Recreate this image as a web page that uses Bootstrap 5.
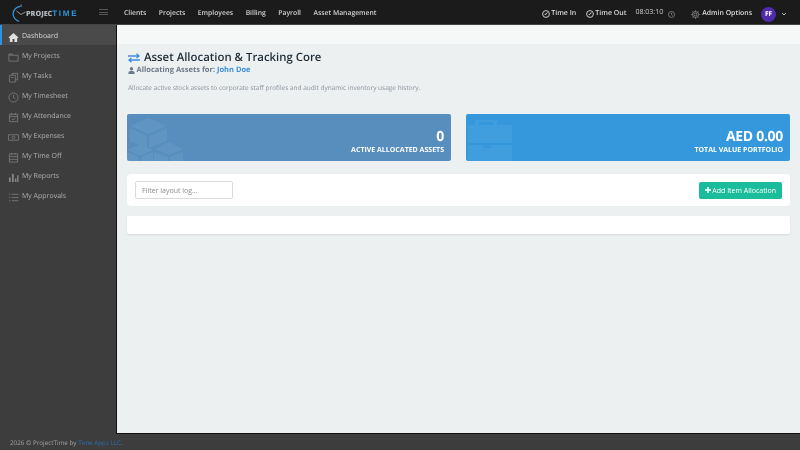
<!DOCTYPE html>
<html lang="en">
<head>
<meta charset="utf-8">
<title>ProjectTime</title>
<link href="https://cdn.jsdelivr.net/npm/bootstrap@5.3.0/dist/css/bootstrap.min.css" rel="stylesheet">
<style>
html,body{height:450px;overflow:hidden}
body{font-family:"Open Sans","Liberation Sans",sans-serif;background:#3d3d3d;font-size:7px;color:#444;text-rendering:geometricPrecision}
.topbar,.sidebar,.content,.foot{filter:blur(.3px)}
.topbar{height:25px;background:#1b1b1b;border-bottom:1px solid #444;color:#ddd;padding:0}
.brand-box{width:116px;height:24px;flex:none;padding-left:10px}
.brand-txt{font-size:7.2px;font-weight:800;color:#aeb4ba;line-height:1;margin-top:4px;margin-left:0;white-space:nowrap}
.brand-txt span{color:#2f93d8;font-family:"Liberation Sans",sans-serif;font-weight:700;font-size:8px;letter-spacing:1.7px}
.burger{width:9px;height:6px;margin-left:auto;margin-right:8px;border-top:1px solid #555;border-bottom:1px solid #555;position:relative}
.burger::after{content:"";position:absolute;left:0;right:0;top:2px;height:1px;background:#555}
.topnav{gap:12.5px;font-size:6.8px;font-weight:600;color:#d0d0d0;margin-left:8px;margin-top:3px}
.top-right{color:#ddd;font-size:7px;font-weight:600;margin-left:auto;padding-right:13px;margin-top:4px}
.ti{gap:1px;margin-right:10px}
.ti+.ti{margin-right:9px}
.clock{font-size:7px;font-weight:400;margin-right:5px;color:#d0d0d0;margin-top:-2px}
.adm{font-size:6.9px;margin-right:9px}
.gear{margin-right:2px}
.avatar{width:15px;height:15px;border-radius:50%;background:#4f2bab;color:#fff;font-size:6.5px;font-weight:700;margin-right:5px}
.shell{flex:1;min-height:0}
.sidebar{width:116px;flex:none;background:#3d3d3d;font-size:7px;color:#b0b0b0}
.sideitem{height:20px;gap:3px;border-left:2px solid transparent;padding:5px 0 0 6px}
.sideitem svg{width:11px;height:11px;flex:none;color:#858585}
.sideitem.on{background:#4a4a4a;border-left-color:#2f93e0;color:#d8d8d8}
.sideitem.on svg{color:#e0e0e0}
.mainpane{flex:1;min-width:0;background:#ecf0f1;border-left:1px solid #111;border-bottom:1px solid #111;display:flex;flex-direction:column}
.subbar{height:19px;background:#f6f7f7;flex:none}
.content{padding:0 10px}
.ptitle{font-size:11.4px;font-weight:600;color:#1f2b36;line-height:16px;margin:6px 0 0 1px;gap:4px}
.psub{font-size:7.5px;font-weight:700;color:#6c7a89;line-height:11px;gap:1.5px;margin:-1px 0 0 1px}
.psub a{color:#3f8fdc;text-decoration:none}
.pdesc{font-size:6.5px;color:#8a9199;line-height:10px;margin:7px 0 0 1px}
.statrow{gap:15px;margin-top:21px}
.statbox{flex:1;height:47px;border-radius:2px;color:#fff;padding:14px 7px 0;text-align:right;overflow:hidden}
.sb-a{background:#578ebe;width:324px;flex:none}
.sb-b{background:#3598dc}
.stat-num{font-size:14px;font-weight:700;line-height:18px;letter-spacing:-.3px}
.stat-lbl{font-size:7px;font-weight:700;line-height:9px}
.wm{position:absolute;left:0;top:0;height:47px;width:60px;opacity:.06;color:#fff}
.toolbox{background:#fff;border-radius:4px;height:32px;margin-top:13px;padding:0 8px;box-shadow:0 0 1px rgba(0,0,0,.05)}
.filterin{width:98px;height:18px;border:1px solid #d7dbde;border-radius:2px;font-size:7px;padding:0 6px;color:#8b8b8b;background:#fff}
.filterin::placeholder{color:#8b8b8b;opacity:1}
.addbtn{height:17px;background:#1abc9c;color:#fff;font-size:7px;font-weight:400;border:0;border-radius:2px;padding:0 6px;gap:1.5px;line-height:1}
.addbtn:hover{background:#1abc9c;color:#fff}
.emptybox{background:#fff;height:18px;border-radius:2px;margin-top:10px;box-shadow:0 1px 2px rgba(0,0,0,.1)}
.foot{height:16px;flex:none;font-size:6.3px;color:#a3a3a3;padding-left:10px;padding-top:1px}
.foot a{color:#2d6fb0;text-decoration:none}
</style>
</head>
<body class="d-flex flex-column">
<nav class="topbar d-flex align-items-center">
  <div class="brand-box d-flex align-items-center">
    <svg width="16" height="19" viewBox="0 0 16 19" fill="none"><path d="M10 3.500A7.500 7.500 0 0 0 9 18.300" stroke="#2f93d8" stroke-width="1.300"/><path d="M11 1.500v2.500M15.500 9 11 11.500 6.500 8" stroke="#aeb4ba" stroke-width=".8"/></svg>
    <span class="brand-txt">PROJEC<span>TIME</span></span>
    <span class="burger"></span>
  </div>
  <div class="topnav d-flex"><span>Clients</span><span>Projects</span><span>Employees</span><span>Billing</span><span>Payroll</span><span>Asset Management</span></div>
  <div class="top-right d-flex align-items-center">
    <span class="ti d-flex align-items-center"><svg width="8" height="8" viewBox="0 0 8 8" fill="none" stroke="#ddd" stroke-width=".9"><circle cx="4" cy="4" r="3.400"/><path d="M4 4.400 5.400 2.400M4 4.400H2.600"/></svg>Time In</span>
    <span class="ti d-flex align-items-center"><svg width="8" height="8" viewBox="0 0 8 8" fill="none" stroke="#ddd" stroke-width=".9"><circle cx="4" cy="4" r="3.400"/><path d="M4 4.400 5.400 2.400M4 4.400H2.600"/></svg>Time Out</span>
    <span class="clock">08:03:10</span>
    <svg class="me-3" width="7" height="7" viewBox="0 0 7 7" fill="none" stroke="#8a8a8a" stroke-width=".8"><circle cx="3.500" cy="3.500" r="3"/><path d="M3.500 1.800v1.900l1.200.5"/></svg>
    <svg class="gear" width="9" height="9" viewBox="0 0 10 10" fill="none" stroke="#999" stroke-width=".8"><circle cx="5" cy="5" r="1.600"/><circle cx="5" cy="5" r="3.400"/><path d="M5 .3v1.300M5 8.400v1.300M.3 5h1.300M8.400 5h1.300M1.700 1.700l.9.9M7.400 7.400l.9.9M1.700 8.300l.9-.9M7.400 2.600l.9-.9"/></svg>
    <span class="adm">Admin Options</span>
    <span class="avatar d-flex align-items-center justify-content-center">FF</span>
    <svg width="6" height="4" viewBox="0 0 6 4" fill="none" stroke="#bbb" stroke-width="1"><path d="M1 1l2 2 2-2"/></svg>
  </div>
</nav>
<div class="shell d-flex">
  <aside class="sidebar">
    <div class="sideitem on d-flex align-items-center"><svg viewBox="0 0 12 12" fill="currentColor"><path fill-rule="evenodd" d="M6 1 .6 6l.7.8L2 6.200V11h8V6.200l.7.6.7-.8zM5 7.500h2V11H5z"/></svg>Dashboard</div>
    <div class="sideitem d-flex align-items-center"><svg viewBox="0 0 12 12" fill="none" stroke="currentColor" stroke-width=".8"><path d="M1 3.500h10V10H1zM1 3.500V2.200h3.800l.7 1.300"/></svg>My Projects</div>
    <div class="sideitem d-flex align-items-center"><svg viewBox="0 0 12 12" fill="none" stroke="currentColor" stroke-width=".8"><path d="M1.500 3.500h6.500V11H1.500zM4.500 3.500V1.500H10.500V8.500H8M3.500 6h2.500"/></svg>My Tasks</div>
    <div class="sideitem d-flex align-items-center"><svg viewBox="0 0 12 12" fill="none" stroke="currentColor" stroke-width=".8"><circle cx="6" cy="6" r="5"/><path d="M6 3v3.200l2 1.300"/></svg>My Timesheet</div>
    <div class="sideitem d-flex align-items-center"><svg viewBox="0 0 12 12" fill="none" stroke="currentColor" stroke-width=".8"><path d="M1.500 2.500h9v8h-9zM1.500 5h9M4 1v2M8 1v2M4 7.500l1.500 1.300L8 6.800"/></svg>My Attendance</div>
    <div class="sideitem d-flex align-items-center"><svg viewBox="0 0 12 12" fill="none" stroke="currentColor" stroke-width=".8"><path d="M.6 3h10.800v6H.6z"/><circle cx="6" cy="6" r="1.500"/></svg>My Expenses</div>
    <div class="sideitem d-flex align-items-center"><svg viewBox="0 0 12 12" fill="none" stroke="currentColor" stroke-width=".8"><path d="M1.500 2h9v9h-9zM1.500 5h9M1.500 8h9M4 1v2M8 1v2"/></svg>My Time Off</div>
    <div class="sideitem d-flex align-items-center"><svg viewBox="0 0 12 12" fill="currentColor"><path d="M1 6h2v5H1zM4.300 2h2v9h-2zM7.500 7h1.700v4H7.500zM10 3.500h1.500V11H10z"/></svg>My Reports</div>
    <div class="sideitem d-flex align-items-center"><svg viewBox="0 0 12 12" fill="none" stroke="currentColor" stroke-width=".8"><path d="M4 2.500h7.500M4 6h7.500M4 9.500h7.500M1 2.500h1.500M1 6h1.500M1 9.500h1.500"/></svg>My Approvals</div>
  </aside>
  <main class="mainpane">
    <div class="subbar"></div>
    <div class="content">
      <h1 class="ptitle d-flex align-items-center">
        <svg width="12" height="10" viewBox="0 0 12 10" fill="none" stroke="#3f8fdc" stroke-width="1.300"><path d="M0 3h11M8.500 .8 11 3 8.500 5M12 7H1M3.500 5 1 7l2.500 2.200"/></svg>
        Asset Allocation &amp; Tracking Core</h1>
      <div class="psub d-flex align-items-center">
        <svg width="7" height="7" viewBox="0 0 7 7" fill="#6c7a89"><circle cx="3.500" cy="1.800" r="1.700"/><path d="M.3 7c0-2.500 1-3.300 3.200-3.300S6.700 4.500 6.700 7z"/></svg>
        <span>Allocating Assets for: <a href="#">John Doe</a></span>
      </div>
      <p class="pdesc">Allocate active stock assets to corporate staff profiles and audit dynamic inventory usage history.</p>
      <div class="statrow d-flex">
        <div class="statbox sb-a position-relative">
          <svg class="wm" viewBox="0 0 60 47" fill="currentColor"><path d="M21 4 40 12 21 20 3 12zM3 14l17 8v12L3 27zM40 14v13l-18 7V22zM42 28l14 7-14 6-14-6zM13 30l13 6-13 6L0 36zM0 38l12 5v4H0zM27 38l14 5v4H27zM56 38v9H43v-4zM14 43l12-5v9H14z"/></svg>
          <div class="stat-num">0</div><div class="stat-lbl">ACTIVE ALLOCATED ASSETS</div>
        </div>
        <div class="statbox sb-b position-relative">
          <svg class="wm" viewBox="0 0 60 47" fill="currentColor"><path fill-rule="evenodd" d="M9 11V6h22v5h15v18H2V11zM13 8v3h14V8zM2 31h15v3h8v-3h21v16H2z"/></svg>
          <div class="stat-num">AED 0.00</div><div class="stat-lbl">TOTAL VALUE PORTFOLIO</div>
        </div>
      </div>
      <div class="toolbox d-flex align-items-center justify-content-between">
        <input class="filterin" type="text" placeholder="Filter layout log...">
        <button class="btn addbtn d-flex align-items-center" type="button"><svg width="6" height="6" viewBox="0 0 6 6" fill="#fff"><path d="M2.200 0h1.600v2.200H6v1.600H3.800V6H2.200V3.800H0V2.200h2.200z"/></svg>Add Item Allocation</button>
      </div>
      <div class="emptybox"></div>
    </div>
  </main>
</div>
<footer class="foot d-flex align-items-center"><span>2026 © ProjectTime by <a href="#">Time Appz LLC</a>.</span></footer>
<script src="https://cdn.jsdelivr.net/npm/bootstrap@5.3.0/dist/js/bootstrap.bundle.min.js"></script>
</body>
</html>
